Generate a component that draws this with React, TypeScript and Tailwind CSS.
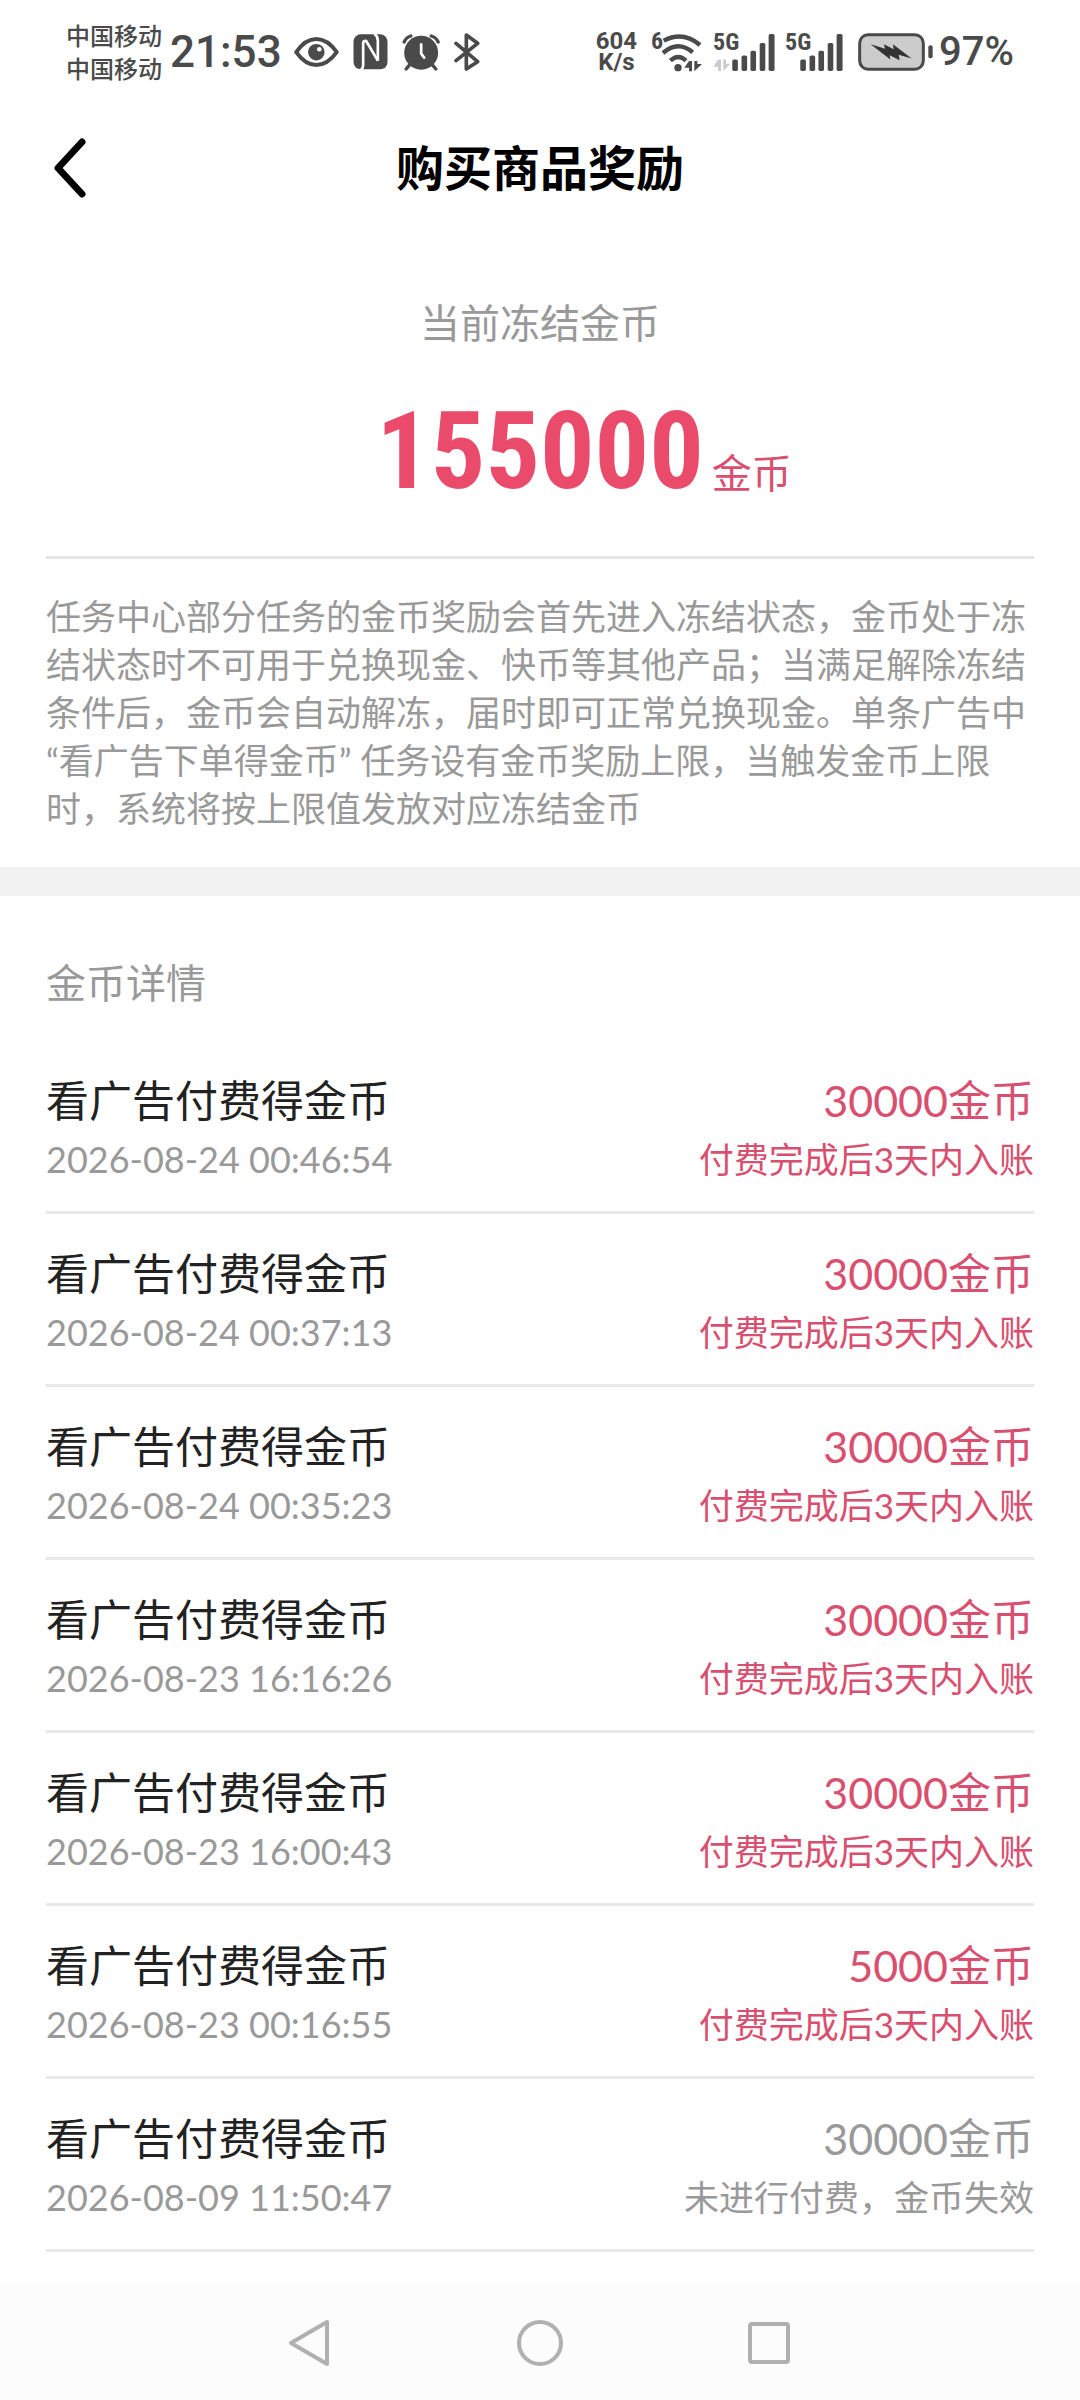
type CoinRecord = {
  id: number;
  time: string;
  coins: number;
  expired?: boolean;
};

const records: CoinRecord[] = [
  { id: 1, time: "2026-08-24 00:46:54", coins: 30000 },
  { id: 2, time: "2026-08-24 00:37:13", coins: 30000 },
  { id: 3, time: "2026-08-24 00:35:23", coins: 30000 },
  { id: 4, time: "2026-08-23 16:16:26", coins: 30000 },
  { id: 5, time: "2026-08-23 16:00:43", coins: 30000 },
  { id: 6, time: "2026-08-23 00:16:55", coins: 5000 },
  { id: 7, time: "2026-08-09 11:50:47", coins: 30000, expired: true },
];

function EyeIcon() {
  return (
    <svg viewBox="735 80 135 91" className="w-[45px] h-[30px]">
      <path
        d="M741 126Q768 86 802 86T864 126Q836 165 802 165T741 126Z"
        fill="none"
        stroke="currentColor"
        strokeWidth="12"
        strokeLinejoin="round"
      />
      <circle cx="802" cy="126" r="25" fill="currentColor" />
      <circle cx="811" cy="117" r="7" fill="#fff" />
    </svg>
  );
}

function NfcIcon() {
  return (
    <svg viewBox="911 71 104 108" className="w-[35px] h-9">
      <rect x="912" y="72" width="102" height="105" rx="22" fill="currentColor" />
      <g fill="none" stroke="#fff" strokeWidth="8">
        <path d="M930 181Q941 176 941 164V98Q942 90 950 92L985 151" />
        <path d="M985 151V90Q984 76 974 70" />
      </g>
    </svg>
  );
}

function AlarmIcon() {
  return (
    <svg viewBox="1058 68 113 111" className="w-[38px] h-[37px]">
      <circle cx="1115" cy="124" r="51" fill="currentColor" />
      <g fill="none" stroke="currentColor" strokeWidth="10" strokeLinecap="round">
        <path d="M1064 92Q1070 78 1084 74M1145 74Q1160 78 1166 92" />
        <path d="M1079 162L1070 173M1150 162L1159 173" />
      </g>
      <path
        d="M1115 99V127L1124 139"
        fill="none"
        stroke="#fff"
        strokeWidth="8"
        strokeLinecap="round"
      />
    </svg>
  );
}

function BluetoothIcon() {
  return (
    <svg viewBox="1207 67 78 114" className="w-[26px] h-[38px]">
      <path
        d="M1213 98L1278 153L1244 175V73L1278 98L1213 150"
        fill="none"
        stroke="currentColor"
        strokeWidth="11"
        strokeLinecap="round"
        strokeLinejoin="round"
      />
    </svg>
  );
}

function WifiIcon() {
  return (
    <svg viewBox="246 63 126 117" className="w-[42px] h-[39px]">
      <g fill="none" stroke="currentColor" strokeWidth="13">
        <path d="M254 86Q312 56 363 99" />
        <path d="M252 123Q297 84 341 121" />
        <path d="M274 146Q298 124 321 146" />
      </g>
      <circle cx="297" cy="167" r="11" fill="currentColor" />
      <path d="M330 147H339V178H330V167H316Z" fill="currentColor" />
      <path d="M346 178V147H355V156H369Z" fill="currentColor" />
    </svg>
  );
}

function SignalIcon({ idle }: { idle?: boolean }) {
  return (
    <svg viewBox="399 66 187 112" className="w-[62px] h-[37px]">
      {idle && (
        <g fill="#cbcbcb">
          <path d="M414 143H423V178H414V165H400Z" />
          <path d="M430 178V143H438V156H451Z" />
        </g>
      )}
      <g fill="currentColor">
        <rect x="457" y="143" width="17" height="35" rx="5" />
        <rect x="485" y="131" width="17" height="47" rx="5" />
        <rect x="512" y="117" width="17" height="61" rx="5" />
        <rect x="540" y="93" width="17" height="85" rx="5" />
        <rect x="567" y="66" width="18" height="112" rx="5" />
      </g>
    </svg>
  );
}

function BatteryIcon() {
  return (
    <svg viewBox="837 65 225 113" className="w-[75px] h-[38px]">
      <rect
        x="842"
        y="70"
        width="191"
        height="103"
        rx="25"
        fill="#cccccc"
        stroke="currentColor"
        strokeWidth="9"
      />
      <rect x="1048" y="101" width="13" height="39" rx="6" fill="currentColor" />
      <path
        d="M875 98L918 112L915 98L944 113L942 98L998 141L959 130L962 146L932 131L934 144Z"
        fill="#333"
      />
    </svg>
  );
}

function StatusBar() {
  return (
    <div className="flex h-[102px] items-center justify-between pt-[2px] pl-[66px] pr-[66px] font-['Roboto','Noto_Sans_CJK_SC',sans-serif] text-[#4a4a4a]">
      <div className="flex items-center">
        <div className="pt-1 text-[24px] leading-[33px] font-medium">
          <p>中国移动</p>
          <p>中国移动</p>
        </div>
        <span className="ml-2 text-[44px] leading-[60px] font-medium">21:53</span>
        <div className="ml-3 flex items-center gap-[14px]">
          <EyeIcon />
          <NfcIcon />
          <AlarmIcon />
          <BluetoothIcon />
        </div>
      </div>

      <div className="flex items-center">
        <div className="text-center text-[24px] leading-[21px] font-bold">
          <p>604</p>
          <p>K/s</p>
        </div>
        <div className="relative ml-6">
          <span className="absolute -top-1 -left-[10px] text-[24px] leading-[24px] font-bold font-['Roboto_Condensed','Roboto',sans-serif]">
            6
          </span>
          <WifiIcon />
        </div>
        <div className="relative ml-[10px]">
          <span className="absolute -top-1 left-0 text-[24px] leading-[24px] font-bold font-['Roboto_Condensed','Roboto',sans-serif]">
            5G
          </span>
          <SignalIcon idle />
        </div>
        <div className="relative ml-[6px]">
          <span className="absolute -top-1 left-1 text-[24px] leading-[24px] font-bold font-['Roboto_Condensed','Roboto',sans-serif]">
            5G
          </span>
          <SignalIcon />
        </div>
        <div className="ml-[15px]">
          <BatteryIcon />
        </div>
        <span className="ml-[6px] text-[40px] leading-[60px] font-medium">97%</span>
      </div>
    </div>
  );
}

function Header() {
  return (
    <header className="grid h-[132px] grid-cols-[1fr_auto_1fr] items-center px-[46px]">
      <button aria-label="返回" className="justify-self-start p-[7px]">
        <svg viewBox="0 0 34 60" className="w-[34px] h-[60px]">
          <path
            d="M29 4L5 30L29 56"
            fill="none"
            stroke="#000"
            strokeWidth="7"
            strokeLinecap="round"
            strokeLinejoin="round"
          />
        </svg>
      </button>
      <h1 className="text-[48px] leading-[72px] font-bold text-black">购买商品奖励</h1>
    </header>
  );
}

function Summary() {
  return (
    <section className="px-[46px] pt-[59px] pb-[35px]">
      <div className="h-[263px] border-b-[3px] border-[#e5e5e5] box-content text-center">
        <h2 className="text-[40px] leading-[60px] text-[#999]">当前冻结金币</h2>
        <p className="mt-[38px] grid grid-cols-[1fr_auto_1fr] items-baseline gap-2">
          <span className="col-start-2 text-[108px] leading-[120px] font-bold text-[#eb4b6b] font-['Roboto_Condensed','Roboto',sans-serif]">
            155000
          </span>
          <span className="text-left text-[40px] leading-[60px] text-[#d94f70]">金币</span>
        </p>
      </div>
      <p className="mt-[33px] text-[35px] leading-[48px] text-[#999]">
        任务中心部分任务的金币奖励会首先进入冻结状态，金币处于冻结状态时不可用于兑换现金、快币等其他产品；当满足解除冻结条件后，金币会自动解冻，届时即可正常兑换现金。单条广告中“看广告下单得金币”
        任务设有金币奖励上限，当触发金币上限时，系统将按上限值发放对应冻结金币
      </p>
    </section>
  );
}

function RecordItem({ record }: { record: CoinRecord }) {
  return (
    <li className="flex items-center justify-between border-b-[3px] border-[#e8e8e8] pt-[30px] pb-6">
      <div>
        <h3 className="text-[43px] leading-[60px] text-[#222]">看广告付费得金币</h3>
        <p className="text-[36px] leading-[56px] text-[#999]">{record.time}</p>
      </div>
      <div className={record.expired ? "text-right text-[#999]" : "text-right text-[#d94f70]"}>
        <p className="text-[43px] leading-[60px]">{record.coins}金币</p>
        <p className="text-[35px] leading-[56px]">
          {record.expired ? "未进行付费，金币失效" : "付费完成后3天内入账"}
        </p>
      </div>
    </li>
  );
}

function NavBar() {
  return (
    <nav className="mt-auto flex h-[114px] items-center justify-center gap-[181px] bg-[#fcfcfc] text-[#b0b0b0]">
      <button aria-label="后退">
        <svg viewBox="0 0 48 48" className="size-12">
          <path
            d="M40 3V45L4 24Z"
            fill="none"
            stroke="currentColor"
            strokeWidth="4"
            strokeLinejoin="round"
          />
        </svg>
      </button>
      <button aria-label="主页">
        <svg viewBox="0 0 48 48" className="size-12">
          <circle cx="24" cy="24" r="21" fill="none" stroke="currentColor" strokeWidth="4" />
        </svg>
      </button>
      <button aria-label="最近任务">
        <svg viewBox="0 0 48 48" className="size-12">
          <rect
            x="5"
            y="5"
            width="38"
            height="38"
            rx="2"
            fill="none"
            stroke="currentColor"
            strokeWidth="4"
          />
        </svg>
      </button>
    </nav>
  );
}

export default function App() {
  return (
    <div
      lang="zh-CN"
      className="flex min-h-screen flex-col bg-white font-['Lato','Noto_Sans_CJK_SC',sans-serif]"
    >
      <StatusBar />
      <Header />
      <main>
        <Summary />
        <section className="border-t-[29px] border-[#f2f2f2] px-[46px] pt-[57px] pb-[34px]">
          <h2 className="text-[40px] leading-[60px] text-[#999]">金币详情</h2>
          <ul className="mt-[28px]">
            {records.map((record) => (
              <RecordItem key={record.id} record={record} />
            ))}
          </ul>
        </section>
      </main>
      <NavBar />
    </div>
  );
}
